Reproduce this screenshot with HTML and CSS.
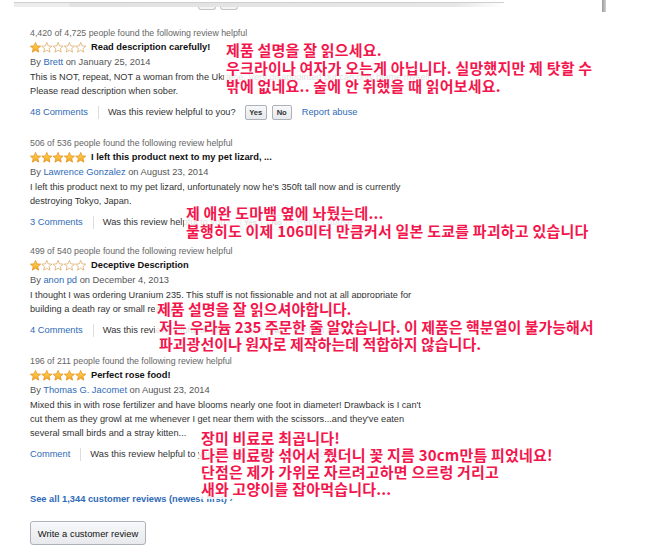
FILE: index.html
```html
<!DOCTYPE html>
<html lang="en">
<head>
<meta charset="utf-8">
<title>Reviews</title>
<link rel="stylesheet" href="styles.css">
</head>
<body>
<svg class="defs" width="0" height="0" aria-hidden="true">
  <defs>
    <linearGradient id="gold" x1="0" y1="0" x2="0" y2="1">
      <stop offset="0" stop-color="#ffd75a"/>
      <stop offset="1" stop-color="#f5a623"/>
    </linearGradient>
    <symbol id="sf" viewBox="0 0 11 11">
      <polygon points="5.5,0.4 6.91,3.86 10.64,4.13 7.78,6.54 8.67,10.17 5.5,8.2 2.33,10.17 3.22,6.54 0.36,4.13 4.09,3.86" fill="url(#gold)" stroke="#e38b12" stroke-width="0.7" stroke-linejoin="round"/>
    </symbol>
    <symbol id="se" viewBox="0 0 11 11">
      <polygon points="5.5,0.4 6.91,3.86 10.64,4.13 7.78,6.54 8.67,10.17 5.5,8.2 2.33,10.17 3.22,6.54 0.36,4.13 4.09,3.86" fill="#fff" stroke="#d8a25a" stroke-width="0.7" stroke-linejoin="round"/>
    </symbol>
  </defs>
</svg>
<div class="page">
  <div class="topbar">
    <div class="topline">
      <div class="topline-btns"><span></span><span></span></div>
    </div>
    <div class="scrollstub"></div>
  </div>

  <div class="review">
    <div class="helpful">4,420 of 4,725 people found the following review helpful</div>
    <div class="title">
      <svg class="stars" width="57" height="11" viewBox="0 0 57 11"><use href="#sf" x="0" width="11" height="11"/><use href="#se" x="11.3" width="11" height="11"/><use href="#se" x="22.6" width="11" height="11"/><use href="#se" x="33.9" width="11" height="11"/><use href="#se" x="45.2" width="11" height="11"/></svg>
      <span class="title-text">Read description carefully!</span>
    </div>
    <div class="byline">By <a class="link">Brett</a> on January 25, 2014</div>
    <div class="body">This is NOT, repeat, NOT a woman from the Ukraine. Very disappointed but can only blame myself.<br>Please read description when sober.</div>
    <div class="actions">
      <a class="link">48 Comments</a><span class="sep"></span><span>Was this review helpful to you?</span><span class="vote yes">Yes</span><span class="vote">No</span><a class="link report">Report abuse</a>
    </div>
  </div>

  <div class="review r2">
    <div class="helpful">506 of 536 people found the following review helpful</div>
    <div class="title">
      <svg class="stars" width="57" height="11" viewBox="0 0 57 11"><use href="#sf" x="0" width="11" height="11"/><use href="#sf" x="11.3" width="11" height="11"/><use href="#sf" x="22.6" width="11" height="11"/><use href="#sf" x="33.9" width="11" height="11"/><use href="#sf" x="45.2" width="11" height="11"/></svg>
      <span class="title-text">I left this product next to my pet lizard, ...</span>
    </div>
    <div class="byline">By <a class="link">Lawrence Gonzalez</a> on August 23, 2014</div>
    <div class="body">I left this product next to my pet lizard, unfortunately now he's 350ft tall now and is currently<br>destroying Tokyo, Japan.</div>
    <div class="actions">
      <a class="link">3 Comments</a><span class="sep"></span><span>Was this review helpful to you?</span><span class="vote yes">Yes</span><span class="vote">No</span><a class="link report">Report abuse</a>
    </div>
  </div>

  <div class="review">
    <div class="helpful">499 of 540 people found the following review helpful</div>
    <div class="title">
      <svg class="stars" width="57" height="11" viewBox="0 0 57 11"><use href="#sf" x="0" width="11" height="11"/><use href="#se" x="11.3" width="11" height="11"/><use href="#se" x="22.6" width="11" height="11"/><use href="#se" x="33.9" width="11" height="11"/><use href="#se" x="45.2" width="11" height="11"/></svg>
      <span class="title-text">Deceptive Description</span>
    </div>
    <div class="byline">By <a class="link">anon pd</a> on December 4, 2013</div>
    <div class="body">I thought I was ordering Uranium 235. This stuff is not fissionable and not at all appropriate for<br>building a death ray or small reactor.</div>
    <div class="actions">
      <a class="link">4 Comments</a><span class="sep"></span><span>Was this review helpful to you?</span><span class="vote yes">Yes</span><span class="vote">No</span><a class="link report">Report abuse</a>
    </div>
  </div>

  <div class="review">
    <div class="helpful">196 of 211 people found the following review helpful</div>
    <div class="title">
      <svg class="stars" width="57" height="11" viewBox="0 0 57 11"><use href="#sf" x="0" width="11" height="11"/><use href="#sf" x="11.3" width="11" height="11"/><use href="#sf" x="22.6" width="11" height="11"/><use href="#sf" x="33.9" width="11" height="11"/><use href="#sf" x="45.2" width="11" height="11"/></svg>
      <span class="title-text">Perfect rose food!</span>
    </div>
    <div class="byline">By <a class="link">Thomas G. Jacomet</a> on August 23, 2014</div>
    <div class="body">Mixed this in with rose fertilizer and have blooms nearly one foot in diameter! Drawback is I can't<br>cut them as they growl at me whenever I get near them with the scissors...and they've eaten<br>several small birds and a stray kitten...</div>
    <div class="actions">
      <a class="link">Comment</a><span class="sep"></span><span>Was this review helpful to you?</span><span class="vote yes">Yes</span><span class="vote">No</span><a class="link report">Report abuse</a>
    </div>
  </div>

  <a class="see-all">See all 1,344 customer reviews (newest first) ›</a>
  <div class="write-wrap"><span class="write">Write a customer review</span></div>

  <div class="note n1">제품 설명을 잘 읽으세요.<br>우크라이나 여자가 오는게 아닙니다. 실망했지만 제 탓할 수<br>밖에 없네요.. 술에 안 취했을 때 읽어보세요.</div>
  <div class="note n2">제 애완 도마뱀 옆에 놔뒀는데...<br>불행히도 이제 106미터 만큼커서 일본 도쿄를 파괴하고 있습니다</div>
  <div class="note n3"><span class="first">제품 설명을 잘 읽으셔야합니다.</span><br>저는 우라늄 235 주문한 줄 알았습니다. 이 제품은 핵분열이 불가능해서<br>파괴광선이나 원자로 제작하는데 적합하지 않습니다.</div>
  <div class="note n4">장미 비료로 최곱니다!<br>다른 비료랑 섞어서 줬더니 꽃 지름 30cm만틈 피었네요!<br>단점은 제가 가위로 자르려고하면 으르렁 거리고<br>새와 고양이를 잡아먹습니다...</div>
</div>
</body>
</html>
```

FILE: styles.css
```css
* { box-sizing: border-box; }
html, body { margin: 0; padding: 0; background: #fff; }
body {
  font-family: "Liberation Sans", Arial, sans-serif;
  color: #333;
}
.defs { position: absolute; width: 0; height: 0; overflow: hidden; }

.page {
  position: relative;
  width: 650px;
  height: 556px;
  overflow: hidden;
}

/* top remnant of previous block */
.topbar {
  display: flex;
  align-items: flex-start;
  height: 12px;
  margin-bottom: 14px;
}
.topline {
  margin-top: 2px;
  margin-left: 14px;
  width: 490px;
  height: 5px;
  border-top: 1px solid #cfcfcf;
  background: linear-gradient(to right, #ececec 0, #ececec 55px, #e2e2e2 56px, #e6e6e6 440px, rgba(255,255,255,0) 490px);
  position: relative;
}
.topline-btns {
  display: flex;
  gap: 4px;
  margin-left: 184px;
  margin-top: 4px;
}
.topline-btns span {
  display: block;
  width: 18px;
  height: 3px;
  border: 1px solid #c4c4c4;
  border-top: none;
  border-radius: 0 0 3px 3px;
  background: #f4f4f4;
}
.scrollstub {
  margin-left: auto;
  margin-right: 44px;
  width: 4px;
  height: 12px;
  background: linear-gradient(to right, #9a9a9a, #d0d0d0);
}

.review {
  margin-left: 30px;
  margin-bottom: 14px;
}
.review.r2 { margin-bottom: 12px; }

.helpful {
  font-size: 8.8px;
  line-height: 14px;
  color: #666;
}
.title {
  display: flex;
  align-items: center;
  gap: 4px;
  height: 14px;
}
.stars { display: block; flex: none; }
.title-text {
  font-weight: bold;
  font-size: 9.3px;
  color: #111;
}
.byline {
  margin-top: 1px;
  font-size: 9.3px;
  line-height: 14px;
  color: #555;
}
.link { color: #2f6bb6; text-decoration: none; }
.body {
  margin-top: 1px;
  font-size: 9.2px;
  line-height: 14px;
  color: #333;
}
.actions {
  margin-top: 4px;
  height: 20px;
  display: flex;
  align-items: center;
  font-size: 9.3px;
  color: #333;
}
.sep {
  width: 1px;
  height: 13px;
  background: #ddd;
  margin: 0 9px 0 10px;
}
.vote {
  display: inline-flex;
  align-items: center;
  justify-content: center;
  height: 15px;
  min-width: 20px;
  padding: 0 3px;
  margin-left: 5px;
  font-size: 7.6px;
  font-weight: bold;
  color: #333;
  border: 1px solid #adb1b8;
  border-radius: 2px;
  background: linear-gradient(#f7f8fa, #e7e9ec);
}
.vote.yes { margin-left: 9px; min-width: 22px; }
.report { margin-left: 10px; }

.see-all {
  display: block;
  margin: 28px 0 0 30px;
  font-size: 9.3px;
  line-height: 14px;
  font-weight: bold;
  color: #2f6bb6;
}
.write-wrap { margin: 15px 0 0 30px; }
.write {
  display: inline-flex;
  align-items: center;
  justify-content: center;
  width: 116px;
  height: 24px;
  font-size: 9.4px;
  color: #111;
  border: 1px solid #adb1b8;
  border-radius: 3px;
  background: linear-gradient(#f7f8fa, #e7e9ec);
  box-shadow: 0 1px 0 rgba(255,255,255,.6) inset;
}

/* Korean annotation overlays */
.note {
  position: absolute;
  padding: 2px 6px 2px 2px;
  background: rgba(255, 255, 255, 0.84);
  font-family: "Noto Sans CJK KR", "Noto Sans", sans-serif;
  font-weight: 700;
  font-size: 15px;
  letter-spacing: 0.2px;
  line-height: 18px;
  color: #f3164d;
  white-space: nowrap;
}
.n1 { left: 224px; top: 39px; }
.n2 { left: 184px; top: 202px; }
.n3 { left: 155px; top: 298px; line-height: 17.5px; padding-left: 4px; letter-spacing: 0; }
.n3 .first { margin-left: -2px; }
.n4 { left: 199px; top: 427px; line-height: 17px; }
```
